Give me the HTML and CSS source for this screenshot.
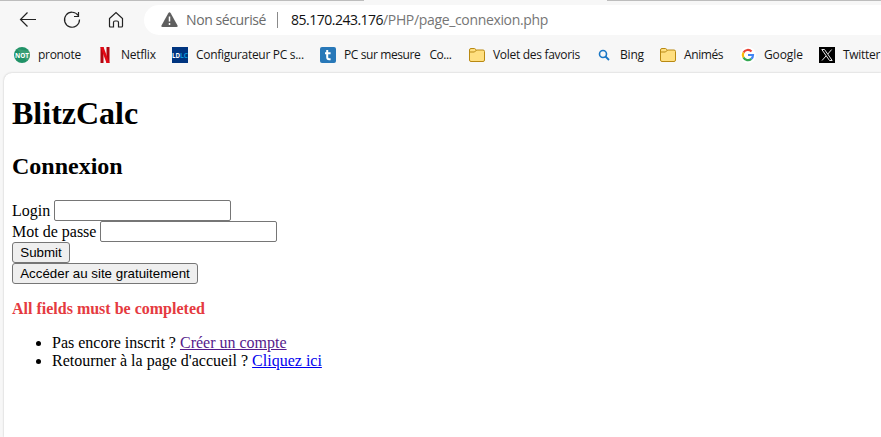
FILE: index.html
```html
<!DOCTYPE html>
<html lang="fr">
<head>
<meta charset="utf-8">
<title>BlitzCalc</title>
<link rel="stylesheet" href="styles.css">
</head>
<body>
<div class="tabs"><span class="tab-left"></span><span class="tab-right"></span></div>
<header class="toolbar">
  <svg class="nav back" width="18" height="18" viewBox="0 0 18 18"><path d="M17 8.5H1.500M8.500 1.500l-7 7 7 7"/></svg>
  <svg class="nav reload" width="18" height="18" viewBox="0 0 18 18"><path d="M15.200 4.500A7.500 7.500 0 1 0 16.500 8.500M15.500 1v4.500H11"/></svg>
  <svg class="nav home" width="16" height="18" viewBox="0 0 16 18"><path d="M1.500 7.500 8 1.600l6.500 5.900V15q0 1-1 1H10.500v-4.500q0-1.500-1.500-1.500H7q-1.500 0-1.500 1.500V16H2.500q-1 0-1-1z"/></svg>
  <div class="address">
    <svg width="17" height="16" viewBox="0 0 17 16"><path d="M7.300 1.200q1.200-2 2.400 0l6.700 12q.9 1.800-1 1.800H1.600q-1.900 0-1-1.800z" fill="#5f5f5f"/><path d="M8.500 4.500v5M8.500 11v2" stroke="#fff" stroke-width="1.500"/></svg>
    <span class="insecure">Non sécurisé</span>
    <span class="divider"></span>
    <span class="host">85.170.243.176</span><span class="path">/PHP/page_connexion.php</span>
  </div>
</header>
<nav class="bookmarks">
  <div class="bm b1"><svg width="16" height="16" viewBox="0 0 16 16"><circle cx="8" cy="8" r="8" fill="#209267"/><path d="M3 2 13 14a8 8 0 0 0 2-10z" fill="#4fa880" opacity=".6"/><text class="not" x="1" y="10.500" textLength="14" lengthAdjust="spacingAndGlyphs">NOT</text></svg><span>pronote</span></div>
  <div class="bm b2"><svg width="16" height="16" viewBox="0 0 16 16"><path d="M3.500 0h3v16h-3zM9.500 0h3v16h-3z" fill="#b0060f"/><path d="M3.500 0h3l6 16h-3z" fill="#e50914"/></svg><span>Netflix</span></div>
  <div class="bm b3"><svg width="16" height="16" viewBox="0 0 16 16"><path d="M0 0h16v16H0z" fill="#003580"/><text class="ldlc" x="0" y="10.500" textLength="8" lengthAdjust="spacingAndGlyphs">LD</text><text class="ldlc cyan" x="8" y="10.500" textLength="8" lengthAdjust="spacingAndGlyphs">LC</text></svg><span>Configurateur PC s...</span></div>
  <div class="bm b4"><svg width="16" height="16" viewBox="0 0 16 16"><rect width="16" height="16" rx="2" fill="#2878b8"/><path d="M7.200 3v7.300q0 1.900 1.900 1.900h1.500M5 6.300h5.600" fill="none" stroke="#fff" stroke-width="2"/></svg><span>PC sur mesure</span><span class="co">Co...</span></div>
  <div class="bm b5"><svg width="16" height="16" viewBox="0 0 16 16"><path d="M.5 3q0-1.500 1.500-1.500h3.500l2 1.500H14q1.500 0 1.500 1.500V13q0 1.500-1.500 1.500H2Q.5 14.500.5 13z" fill="#ffdf80" stroke="#b98912"/><path d="M1 5h4.500l2-2" fill="none" stroke="#b98912"/></svg><span>Volet des favoris</span></div>
  <div class="bm b6"><svg width="16" height="16" viewBox="0 0 16 16"><circle cx="7" cy="7" r="3.500" fill="none" stroke="#1976c5" stroke-width="1.600"/><path d="m9.500 9.500 3.500 3.500" stroke="#1976c5" stroke-width="1.800"/></svg><span>Bing</span></div>
  <div class="bm b7"><svg width="16" height="16" viewBox="0 0 16 16"><path d="M.5 3q0-1.500 1.500-1.500h3.500l2 1.500H14q1.500 0 1.500 1.500V13q0 1.500-1.500 1.500H2Q.5 14.500.5 13z" fill="#ffdf80" stroke="#b98912"/><path d="M1 5h4.500l2-2" fill="none" stroke="#b98912"/></svg><span>Animés</span></div>
  <div class="bm b8"><svg width="16" height="16" viewBox="0 0 16 16"><circle cx="8" cy="8" r="8" fill="#fff"/><g fill="none" stroke-width="2.200"><path d="M3.500 5.500A5 5 0 0 1 11.500 4.500" stroke="#ea4335"/><path d="M3.500 5.500a5 5 0 0 0 0 5" stroke="#fbbc05"/><path d="M3.500 10.500a5 5 0 0 0 7.800 1.400" stroke="#34a853"/><path d="M8 8h5q0 2.600-1.700 3.900" stroke="#4285f4"/></g></svg><span>Google</span></div>
  <div class="bm b9"><svg width="16" height="16" viewBox="0 0 16 16"><path d="M0 0h16v16H0z" fill="#000"/><path d="M2.800 2.500h2.700l7.700 11h-2.700zM12.700 2.500 8.800 7M7 9l-4 4.500" fill="none" stroke="#e8e8e8"/></svg><span>Twitter</span></div>
</nav>
<main class="page">
  <h1>BlitzCalc</h1>
  <h2>Connexion</h2>
  <form>
    <div class="row"><label for="login">Login</label><input id="login" type="text"></div>
    <div class="row"><label for="password">Mot de passe</label><input id="password" type="password"></div>
    <div class="row"><button type="button" class="submit">Submit</button></div>
    <div class="row"><button type="button" class="free">Accéder au site gratuitement</button></div>
  </form>
  <p class="error">All fields must be completed</p>
  <ul>
    <li>Pas encore inscrit ? <a class="visited" href="#compte">Créer un compte</a></li>
    <li>Retourner à la page d'accueil ? <a href="#accueil">Cliquez ici</a></li>
  </ul>
</main>
</body>
</html>
```
FILE: styles.css
```css
* { box-sizing: border-box; }
body {
  margin: 0;
  height: 437px;
  overflow: hidden;
  display: flex;
  flex-direction: column;
  background: #f7f7f7;
  font-family: "Open Sans", "Noto Sans", sans-serif;
}
svg { flex: none; display: block; }
.tabs { height: 1px; display: flex; justify-content: space-between; flex: none; }
.tab-left { width: 364px; background: #bdbdbd; }
.tab-right { width: 274px; background: #bdbdbd; }
.toolbar { height: 36px; flex: none; display: flex; align-items: flex-start; padding: 4px 0 0 19px; }
.nav { margin-top: 6px; fill: none; stroke: #222; stroke-width: 1.2; }
.reload { margin-left: 26px; }
.home { margin-left: 27px; }
.address {
  height: 30px;
  margin-left: 20px;
  padding-left: 17px;
  flex: 1;
  display: flex;
  align-items: center;
  border-radius: 15px 0 0 15px;
  background: #fff;
  font-size: 14px;
  line-height: 18px;
  white-space: nowrap;
}
.insecure { width: 80px; margin-left: 8px; color: #6b6b6b; letter-spacing: -0.4px; }
.divider { width: 1px; height: 16px; margin: 0 13px 0 11px; background: #8a8a8a; }
.host { width: 92px; color: #111; letter-spacing: -0.5px; }
.path { color: #767676; letter-spacing: -0.34px; }
.bookmarks { height: 36px; flex: none; display: flex; align-items: center; padding: 0 0 0 14px; font-size: 12px; line-height: 16px; color: #161616; }
.bm { display: flex; align-items: center; gap: 8px; flex: none; white-space: nowrap; }
.b1 { width: 83px; letter-spacing: -0.3px; }
.b2 { width: 75px; letter-spacing: -0.25px; }
.b3 { width: 148px; letter-spacing: -0.3px; }
.b4 { width: 149px; letter-spacing: -0.4px; }
.b5 { width: 127px; letter-spacing: -0.3px; }
.b6 { width: 64px; letter-spacing: -0.2px; }
.b7 { width: 80px; letter-spacing: -0.4px; }
.b8 { width: 79px; letter-spacing: -0.1px; }
.b9 { width: 62px; letter-spacing: -0.3px; }
.co { margin-left: 1px; }
.not { font: bold 6.5px "Open Sans", sans-serif; fill: #fff; letter-spacing: 0; }
.ldlc { font: bold 7px "Open Sans", sans-serif; fill: #fff; letter-spacing: 0; }
.cyan { fill: #0898dc; }
.page {
  flex: 1;
  margin-left: 4px;
  padding: 22px 8px 0;
  background: #fff;
  border-top-left-radius: 8px;
  box-shadow: 0 0 2px #bbb;
  color: #000;
  font: 16px/18px "Liberation Serif", serif;
}
h1 { margin: 0 0 21px; font-size: 32px; line-height: 37px; }
h2 { margin: 0 0 20px; font-size: 24px; line-height: 27px; }
.row { height: 21px; display: flex; align-items: center; gap: 4px; }
input { width: 177px; height: 21px; margin: 0; border: 1px solid #767676; border-radius: 2px; background: #fff; }
button { height: 21px; padding: 0; border: 1px solid #767676; border-radius: 3px; background: #efefef; color: #000; font: 13.333px "Liberation Sans", sans-serif; }
.submit { width: 58px; }
.free { width: 186px; }
.error { margin: 16px 0; color: #e53a40; font-weight: bold; }
ul { margin: 0; padding-left: 40px; }
a { color: #00e; }
.visited { color: #551a8b; }
```
